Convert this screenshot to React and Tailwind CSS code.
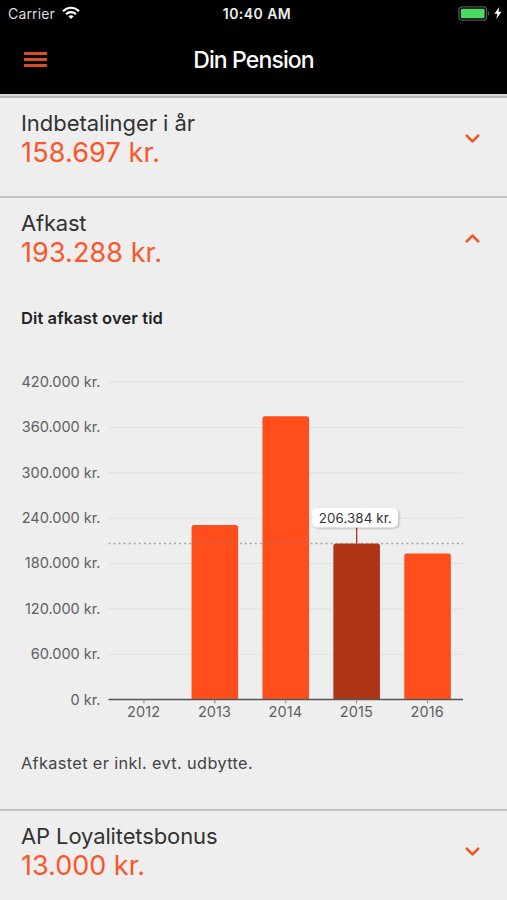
import { useState } from "react";
import { ChevronDown, ChevronUp } from "lucide-react";

const returns = [
  { year: "2012", value: 0 },
  { year: "2013", value: 231000 },
  { year: "2014", value: 375000 },
  { year: "2015", value: 206384 },
  { year: "2016", value: 193288 },
];

const ticks = [
  { value: 420000, label: "420.000 kr." },
  { value: 360000, label: "360.000 kr." },
  { value: 300000, label: "300.000 kr." },
  { value: 240000, label: "240.000 kr." },
  { value: 180000, label: "180.000 kr." },
  { value: 120000, label: "120.000 kr." },
  { value: 60000, label: "60.000 kr." },
  { value: 0, label: "0 kr." },
];

const LEFT = 108.5;
const RIGHT = 463;
const BASE = 339.5;
const STEP = (RIGHT - LEFT) / returns.length;
const BAR = 46.6;

const yFor = (value) => BASE - (value / 60000) * 45.34;
const xFor = (index) => LEFT + STEP * (index + 0.5);

// Bar with only the top corners rounded
function barPath(x, y) {
  return `M${x} ${BASE}V${y + 2.5}q0-2.5 2.5-2.5h${BAR - 5}q2.5 0 2.5 2.5V${BASE}z`;
}

function ReturnChart() {
  const [selected, setSelected] = useState(3);
  const active = returns[selected];
  const lineY = yFor(active.value);

  return (
    <svg width="507" height="370" viewBox="0 0 507 370" className="block">
      {ticks.map((tick) => (
        <g key={tick.value}>
          {tick.value > 0 && (
            <line
              x1={LEFT}
              x2={RIGHT}
              y1={yFor(tick.value)}
              y2={yFor(tick.value)}
              stroke="#e0e0e0"
            />
          )}
          <text
            x="100.5"
            y={yFor(tick.value) + 5}
            textAnchor="end"
            className="fill-[#606060] text-[14.5px]"
          >
            {tick.label}
          </text>
        </g>
      ))}

      {returns.map((item, i) =>
        item.value > 0 ? (
          <path
            key={item.year}
            d={barPath(xFor(i) - BAR / 2, yFor(item.value))}
            fill={i === selected ? "#b03516" : "#ff4e1b"}
            onClick={() => setSelected(i)}
          />
        ) : null
      )}

      <line
        x1={LEFT}
        x2={RIGHT}
        y1={lineY}
        y2={lineY}
        stroke="#808080"
        strokeOpacity="0.7"
        strokeWidth="1.5"
        strokeDasharray="1.9 3.15"
      />
      <line x1={LEFT} x2={RIGHT} y1={BASE} y2={BASE} stroke="#555555" strokeWidth="1.4" />

      {returns.map((item, i) => (
        <g key={item.year}>
          <line
            x1={xFor(i)}
            x2={xFor(i)}
            y1={BASE}
            y2={BASE + 4}
            stroke="#888888"
          />
          <text
            x={xFor(i) - 0.3}
            y="357"
            textAnchor="middle"
            className="fill-[#606060] text-[14.5px] tracking-[0.1px]"
          >
            {item.year}
          </text>
        </g>
      ))}

      <line
        x1={xFor(selected)}
        x2={xFor(selected)}
        y1={lineY - 16}
        y2={lineY}
        stroke="#b03516"
        strokeWidth="1.3"
      />
      <g className="drop-shadow-[1px_1px_1px_rgba(0,0,0,0.25)]">
        <rect
          x={xFor(selected) - 44.5}
          y={lineY - 35.5}
          width="86"
          height="19.5"
          rx="5"
          fill="#ffffff"
        />
      </g>
      <text
        x={xFor(selected) - 1.3}
        y={lineY - 20.8}
        textAnchor="middle"
        className="fill-[#333333] text-[13.3px] tracking-[0.13px]"
      >
        206.384 kr.
      </text>
    </svg>
  );
}

function Summary({ title, titleClass, amount, amountClass, open }) {
  const Icon = open ? ChevronUp : ChevronDown;
  return (
    <div className="flex items-start justify-between pr-[23px] pl-[21px]">
      <div className="whitespace-nowrap">
        <h2 className={`text-[22px] leading-[29px] text-[#333333] ${titleClass}`}>{title}</h2>
        <p className={`text-[27px] leading-[29px] text-[#fb5529] ${amountClass}`}>{amount}</p>
      </div>
      <Icon className="mt-[18px] text-[#f05223]" size={23} strokeWidth={2.7} />
    </div>
  );
}

function StatusBar() {
  return (
    <div className="grid h-7 grid-cols-3 items-center pr-[5px] pl-2 text-white">
      <div className="-mt-0.5 flex items-center gap-[7px]">
        <span className="text-[14px] tracking-[0.15px] text-[#dddddd]">Carrier</span>
        <svg width="18" height="14" viewBox="0 0 18 14" fill="none" stroke="#fff" strokeWidth="2.2">
          <path d="M1 5.2C5.4.6 12.6.6 17 5.2" />
          <path d="M4 8.3c2.8-2.8 7.2-2.8 10 0" />
          <path d="M6.4 10.3c1.5-1.4 3.7-1.4 5.2 0L9 13z" fill="#fff" stroke="none" />
        </svg>
      </div>
      <span className="-mt-0.5 pl-1 text-center text-[14px] font-semibold tracking-[0.45px] whitespace-nowrap text-[#eeeeee]">
        10:40 AM
      </span>
      <div className="-mt-0.5 flex items-center justify-end gap-1">
        <svg width="32" height="15" viewBox="0 0 32 15">
          <rect x="0.9" y="0.9" width="27.6" height="13.2" rx="3.2" fill="none" stroke="#555" strokeWidth="1.4" />
          <rect x="2.8" y="2.8" width="23.8" height="9.4" rx="1.5" fill="#4cd964" />
          <path d="M30 5.2c1.8.8 1.8 3.8 0 4.6z" fill="#555" />
        </svg>
        <svg width="8" height="12" viewBox="0 0 8 12" fill="#fff">
          <path d="M5.3 0 .4 6.8h3L2.3 12l5.3-7.2H4.5z" />
        </svg>
      </div>
    </div>
  );
}

export default function App() {
  return (
    <div className="h-[900px] w-[507px] overflow-hidden bg-[#eeeeee] font-['Inter',sans-serif]">
      <header className="h-[94px] bg-black">
        <StatusBar />
        <div className="grid h-[64px] grid-cols-[100px_1fr_100px] items-center">
          <button className="-mt-px ml-6 flex w-[23px] flex-col gap-[3px]" aria-label="Menu">
            <span className="h-[3px] bg-[#d94e24]" />
            <span className="h-[3px] bg-[#d94e24]" />
            <span className="h-[3px] bg-[#d94e24]" />
          </button>
          <h1 className="text-center text-[23px] font-medium tracking-[-0.88px] text-white">
            Din Pension
          </h1>
        </div>
      </header>
      <div className="h-1 border-b-2 border-[#b4b4b4] bg-[#d8d8d8]" />

      <section className="h-[100px] border-b-2 border-[#c4c4c4] pt-[11px]">
        <Summary
          title="Indbetalinger i år"
          titleClass="tracking-[-0.05px]"
          amount="158.697 kr."
          amountClass="tracking-[0.15px]"
        />
      </section>

      <section className="h-[613px] border-b-2 border-[#c4c4c4] pt-[11px]">
        <Summary
          title="Afkast"
          titleClass="tracking-[-0.2px]"
          amount="193.288 kr."
          amountClass="tracking-[0.08px]"
          open
        />
        <h3 className="mt-[39px] pl-[21px] text-[16.5px] leading-6 font-semibold tracking-[0.1px] text-[#222222]">
          Dit afkast over tid
        </h3>
        <div className="mt-[30px]">
          <ReturnChart />
        </div>
        <p className="mt-[21px] pl-[21px] text-[16.3px] leading-6 tracking-[0.37px] text-[#444444]">
          Afkastet er inkl. evt. udbytte.
        </p>
      </section>

      <section className="pt-[11px]">
        <Summary
          title="AP Loyalitetsbonus"
          titleClass="tracking-[-0.12px]"
          amount="13.000 kr."
          amountClass="tracking-[0px]"
        />
      </section>
    </div>
  );
}
